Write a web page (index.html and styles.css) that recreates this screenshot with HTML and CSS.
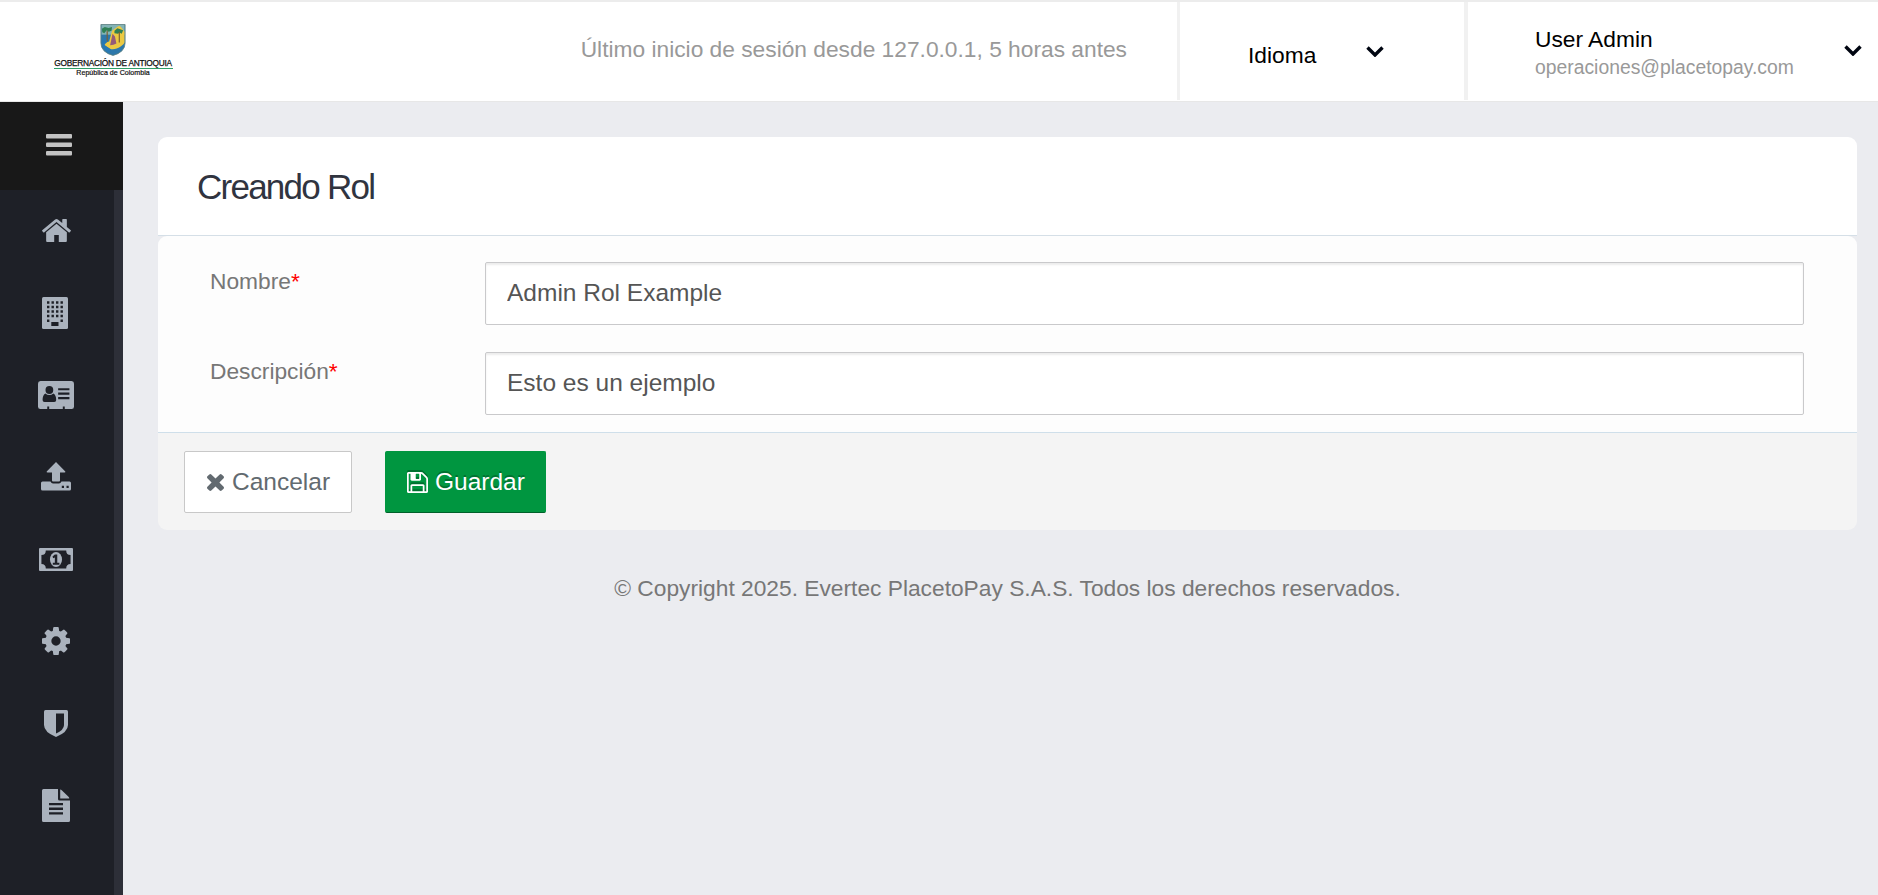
FILE: index.html
```html
<!DOCTYPE html>
<html lang="es">
<head>
<meta charset="utf-8">
<title>Creando Rol</title>
<link rel="stylesheet" href="styles.css">
</head>
<body>
<header class="topbar">
  <div class="brand">
    <svg class="crest" viewBox="0 0 26 33">
      <path d="M.5.5h25v19Q25.500 29 13 32.500.5 29 .5 19.500z" fill="#2d78ab"/>
      <path d="M1 1h24v10H1z" fill="#83b3b5"/>
      <path d="M12 7l6-4.500Q20 1 22 4l3 4v11c-3 5-9 7-14 7l-7-4q1-3 5-4z" fill="#ecc942"/>
      <path d="M1.500 5l3-2 4 1 3.500-1-.5 4-3 1-2-1.500-2.500 3-2-1zM14.500 7l3-2.500 3 1 3 1-1.500 3.500-2-1-2 1-3.500-.5z" fill="#2f8055"/>
      <path d="M7 7v11M19.500 8v11" stroke="#7d5f31" stroke-width="1.200"/>
      <path d="M12.500 10l2.500 3 1.500 7-3 1.500L10 22l1.500-7z" fill="#955b78"/>
      <path d="M1 17l4-2 2 3-3 3.500 7 5-2 3.500Q1 26 1 20z" fill="#2879b3"/>
      <path d="M.5.5h25v19Q25.500 29 13 32.500.5 29 .5 19.500z" fill="none" stroke="#62817c" stroke-width=".8"/>
    </svg>
    <div class="brand-name">GOBERNACIÓN DE ANTIOQUIA</div>
    <div class="brand-sub">República de Colombia</div>
  </div>
  <div class="last-login">Último inicio de sesión desde 127.0.0.1, 5 horas antes</div>
  <div class="language">
    <span>Idioma</span>
    <svg class="chevron" viewBox="0 0 18 11"><path d="M1.500 1.500L9 9l7.500-7.500" /></svg>
  </div>
  <div class="account">
    <div>
      <div class="user">User Admin</div>
      <div class="email">operaciones@placetopay.com</div>
    </div>
    <svg class="chevron" viewBox="0 0 18 11"><path d="M1.500 1.500L9 9l7.500-7.500" /></svg>
  </div>
</header>
<div class="layout">
  <nav class="sidebar">
    <div class="toggle">
      <svg width="26" height="22" viewBox="0 0 26 22"><rect y="0" width="26" height="4.600" rx="1"/><rect y="8.500" width="26" height="4.600" rx="1"/><rect y="17" width="26" height="4.600" rx="1"/></svg>
    </div>
    <div class="menu">
      <div class="item"><svg width="29" height="23" viewBox="89 253 1614 1283" preserveAspectRatio="none"><path d="M1472 992v480q0 26-19 45t-45 19h-384v-384h-256v384h-384q-26 0-45-19t-19-45v-480q0-1 .5-3t.5-3l575-474 575 474q1 2 1 6zm223-69l-62 74q-8 9-21 11h-3q-13 0-21-7l-692-577-692 577q-12 8-24 7-13-2-21-11l-62-74q-8-10-7-23.500t11-21.500l719-599q32-26 76-26t76 26l244 204v-195q0-14 9-23t23-9h192q14 0 23 9t9 23v408l219 182q10 8 11 21.500t-7 23.500z"/></svg></div>
      <div class="item"><svg class="nudge-building" width="26" height="32" viewBox="0 0 26 32"><rect width="26" height="32" rx="1.500"/><g class="cut"><path d="M5 5.500h17M5 10h17M5 14.500h17M5 19h17" stroke-width="2.400" stroke-dasharray="2.400 2.100"/><path d="M5 22.500h2.400v2.400H5zM18.500 22.500h2.400v2.400h-2.400zM9.300 25h7.200v4H9.300z" class="hole"/></g></svg></div>
      <div class="item"><svg width="36" height="28" viewBox="0 0 37 28" preserveAspectRatio="none"><rect width="37" height="28" rx="2.500"/><g class="hole"><circle cx="11.700" cy="9" r="4"/><path d="M7.500 12.500q4.200 3 8.400 0 2.800 1.500 2.800 6.500 0 2-2 2h-10q-2 0-2-2 0-5 2.800-6.500zM20.700 7.300h11.600v2H20.700zM20.700 11.500h11.600v2.300H20.700zM20.700 16h11.600v2.200H20.700zM9.500 25.500h2V28h-2zM25.500 25.500h2V28h-2z"/></g></svg></div>
      <div class="item"><svg width="30" height="29" viewBox="0 0 30 29"><path d="M15 0l9.300 9.500q.4 1-.8 1H19V18.500q0 1-1 1h-6q-1 0-1-1V10.500H6.500q-1.200 0-.8-1z"/><path d="M1.500 19.500h8q1 2 2.500 2h6q1.500 0 2.500-2h8q1.500 0 1.500 1.500v6q0 1.500-1.500 1.500h-27Q0 28.500 0 27v-6q0-1.500 1.500-1.500z"/><path class="hole" d="M20.800 23.800h2.200V26h-2.200zM25.500 23.800h2.200V26h-2.200z"/></svg></div>
      <div class="item"><svg width="34" height="23" viewBox="0 0 35 23" preserveAspectRatio="none"><rect width="35" height="23" rx="1"/><path class="hole" d="M7 2.500h21q0 4.500 4.500 4.500v9q-4.500 0-4.500 4.500H7Q7 16 2.500 16V7Q7 7 7 2.500z"/><ellipse cx="17.500" cy="11.500" rx="6.200" ry="7.500"/><path class="hole" d="M16.300 6.500h2.500v8.200H21v2h-6.800v-2h2.100V9.500l-1.700.8-.7-1.700z"/></svg></div>
      <div class="item"><svg width="28" height="28" viewBox="128 128 1536 1536"><path d="M1152 896q0-106-75-181t-181-75-181 75-75 181 75 181 181 75 181-75 75-181zm512-109v222q0 12-8 23t-20 13l-185 28q-19 54-39 91 35 50 107 138 10 12 10 25t-9 23q-27 37-99 108t-94 71q-12 0-26-9l-138-108q-44 23-91 38-16 136-29 186-7 28-36 28h-222q-14 0-24.500-8.500t-11.500-21.500l-28-184q-49-16-90-37l-141 107q-10 9-25 9-14 0-25-11-126-114-165-168-7-10-7-23 0-12 8-23 15-21 51-66.500t54-70.500q-27-50-41-99l-183-27q-13-2-21-12.500t-8-23.500v-222q0-12 8-23t19-13l186-28q14-46 39-92-40-57-107-138-10-12-10-24 0-10 9-23 26-36 98.500-107.500t94.500-71.500q13 0 26 10l138 107q44-23 91-38 16-136 29-186 7-28 36-28h222q14 0 24.500 8.500t11.500 21.500l28 184q49 16 90 37l142-107q9-9 24-9 13 0 25 10 129 119 165 170 7 8 7 22 0 12-8 23-15 21-51 66.500t-54 70.500q26 50 41 98l183 28q13 2 21 12.500t8 23.500z"/></svg></div>
      <div class="item"><svg width="24" height="27" viewBox="0 0 24 27"><path d="M1.500 0h21Q24 0 24 1.500V15q0 7-12 12Q0 22 0 15V1.500Q0 0 1.500 0z"/><path class="hole" d="M12 3.500h8V15q0 5-8 8.500z"/></svg></div>
      <div class="item"><svg width="28" height="33" viewBox="0 0 28 33"><path d="M1.500 0H16v10q0 1.500 1.500 1.500H28v20q0 1.500-1.500 1.500h-25Q0 33 0 31.500v-30Q0 0 1.500 0zM18.200.5q1 .2 1.800 1l6.500 6.300q.7.700.8 1.700h-9.100z"/><path class="hole" d="M7 14h14v2.300H7zM7 18.600h14v2.300H7zM7 23.200h14v2.300H7z"/></svg></div>
    </div>
  </nav>
  <main class="content">
    <section class="card">
      <div class="card-head"><h1>Creando Rol</h1></div>
      <div class="card-body">
        <div class="row"><label>Nombre<b>*</b></label><input type="text" value="Admin Rol Example"></div>
        <div class="row"><label>Descripción<b>*</b></label><input type="text" value="Esto es un ejemplo"></div>
      </div>
      <div class="card-foot">
        <button class="btn cancel"><svg width="17" height="17" viewBox="302 366 1188 1188"><path d="M1490 1322q0 40-28 68l-136 136q-28 28-68 28t-68-28l-294-294-294 294q-28 28-68 28t-68-28l-136-136q-28-28-28-68t28-68l294-294-294-294q-28-28-28-68t28-68l136-136q28-28 68-28t68 28l294 294 294-294q28-28 68-28t68 28l136 136q28 28 28 68t-28 68l-294 294 294 294q28 28 28 68z"/></svg><span>Cancelar</span></button>
        <button class="btn save"><svg width="21" height="21" viewBox="128 128 1536 1536"><path d="M512 1536h768v-384h-768v384zm896 0h128v-896q0-14-10-38.500t-20-34.500l-281-281q-10-10-34-20t-39-10v416q0 40-28 68t-68 28h-576q-40 0-68-28t-28-68v-416h-128v1280h128v-416q0-40 28-68t68-28h832q40 0 68 28t28 68v416zm-384-928v-320q0-13-9.500-22.500t-22.500-9.500h-192q-13 0-22.500 9.500t-9.500 22.500v320q0 13 9.500 22.500t22.500 9.500h192q13 0 22.500-9.500t9.500-22.500zm640 32v928q0 40-28 68t-68 28h-1344q-40 0-68-28t-28-68v-1344q0-40 28-68t68-28h928q40 0 88 20t76 48l280 280q28 28 48 76t20 88z"/></svg><span>Guardar</span></button>
      </div>
    </section>
    <footer class="copyright">© Copyright 2025. Evertec PlacetoPay S.A.S. Todos los derechos reservados.</footer>
  </main>
</div>
</body>
</html>
```
FILE: styles.css
```css
* { box-sizing: border-box; }
body {
  margin: 0;
  height: 895px;
  display: flex;
  flex-direction: column;
  overflow: hidden;
  background: #ebecf0;
  color: #777;
  font-family: "Liberation Sans", Arial, sans-serif;
  font-size: 22.75px;
}
svg { display: block; flex: none; }

.topbar {
  height: 102px;
  flex: none;
  display: flex;
  background: #fff;
  border-top: 2px solid #ececec;
  border-bottom: 1px solid #e7e7e7;
}
.brand {
  width: 226px;
  padding-top: 22px;
  display: flex;
  flex-direction: column;
  align-items: center;
  color: #111;
  white-space: nowrap;
}
.crest { width: 26px; height: 32px; }
.brand-name {
  width: 119px;
  height: 13px;
  display: flex;
  justify-content: center;
  border-bottom: 1px solid #2f9e68;
  font-size: 8.300px;
  line-height: 15px;
  letter-spacing: -.25px;
  -webkit-text-stroke: .25px #111;
}
.brand-sub {
  font-size: 7.100px;
  line-height: 8px;
  -webkit-text-stroke: .2px #111;
}
.last-login {
  flex: 1;
  padding-right: 50px;
  line-height: 94px;
  text-align: right;
  color: #999;
}
.language, .account {
  height: 98px;
  border-left: 3px solid #f1f1f1;
  display: flex;
  color: #000;
}
.language {
  width: 287px;
  padding-left: 68px;
  gap: 50px;
  line-height: 106px;
}
.language .chevron { margin-top: 44px; }
.account {
  width: 414px;
  border-left-width: 4px;
  padding: 24px 16px 0 67px;
  justify-content: space-between;
}
.account .chevron { margin-top: 19px; }
.user { line-height: 27px; }
.email { font-size: 19.340px; line-height: 28px; color: #999; }
.chevron { width: 18px; height: 11px; fill: none; stroke: #000511; stroke-width: 3.400; }

.layout { flex: 1; display: flex; }
.sidebar {
  width: 123px;
  flex: none;
  display: flex;
  flex-direction: column;
  background: #1e2027;
}
.toggle {
  height: 88px;
  padding: 32px 0 0 46px;
  background: #181818;
  fill: #c2c2c2;
}
.menu {
  flex: 1;
  border-right: 9px solid #2d2f38;
  fill: #aab2bd;
}
.item {
  height: 82.150px;
  padding: 0 2px 1px 0;
  display: flex;
  align-items: center;
  justify-content: center;
}
.nudge-building { margin-right: 2px; }
.hole { fill: #1e2027; }
.cut { stroke: #1e2027; }
.cut .hole { stroke: none; }

.content { flex: 1; padding: 35px 21px 0 35px; }
.card-head {
  height: 99px;
  padding: 29px 39px 0;
  background: #fff;
  border-bottom: 1px solid #d5dfe7;
  border-radius: 9px 9px 0 0;
}
h1 {
  margin: 0;
  font-size: 35px;
  line-height: 42px;
  font-weight: 400;
  letter-spacing: -1.750px;
  color: #30343f;
}
.card-body {
  height: 196px;
  padding: 26px 53px 0 52px;
  display: flex;
  flex-direction: column;
  gap: 27px;
  background: #fdfdfd;
  border-radius: 9px 9px 0 0;
}
.row { display: flex; height: 63px; }
label { width: 275px; line-height: 38px; }
label b { font-weight: 400; color: #f00; }
input {
  flex: 1;
  padding: 0 21px 1px;
  font: 24.500px "Liberation Sans", Arial, sans-serif;
  color: #555;
  background: #fff;
  border: 1px solid #c9c9cb;
  border-radius: 2px;
  box-shadow: inset 0 2px 2px rgba(0, 0, 0, .075);
}
.card-foot {
  height: 98px;
  padding: 18px 26px;
  display: flex;
  gap: 33px;
  background: #f4f4f4;
  border-top: 1px solid #cfdfea;
  border-radius: 0 0 9px 9px;
}
.btn {
  height: 62px;
  padding: 0 20px 0 22px;
  display: flex;
  align-items: center;
  gap: 8px;
  font: 24.500px "Liberation Sans", Arial, sans-serif;
  border: 1px solid #c8c8c8;
  border-radius: 2px;
}
.cancel { width: 168px; background: #fff; color: #626a70; fill: #626a70; }
.save {
  width: 161px;
  padding-left: 21px;
  gap: 7px;
  background: #009640;
  border-color: #009640 #009640 #00602a;
  color: #fff;
  fill: #fff;
  text-shadow: 0 -2px 0 rgba(0, 0, 0, .25);
}
.save svg { filter: drop-shadow(0 -2px 0 rgba(0, 0, 0, .25)); }
.copyright { margin-top: 44px; line-height: 28px; text-align: center; }
```
